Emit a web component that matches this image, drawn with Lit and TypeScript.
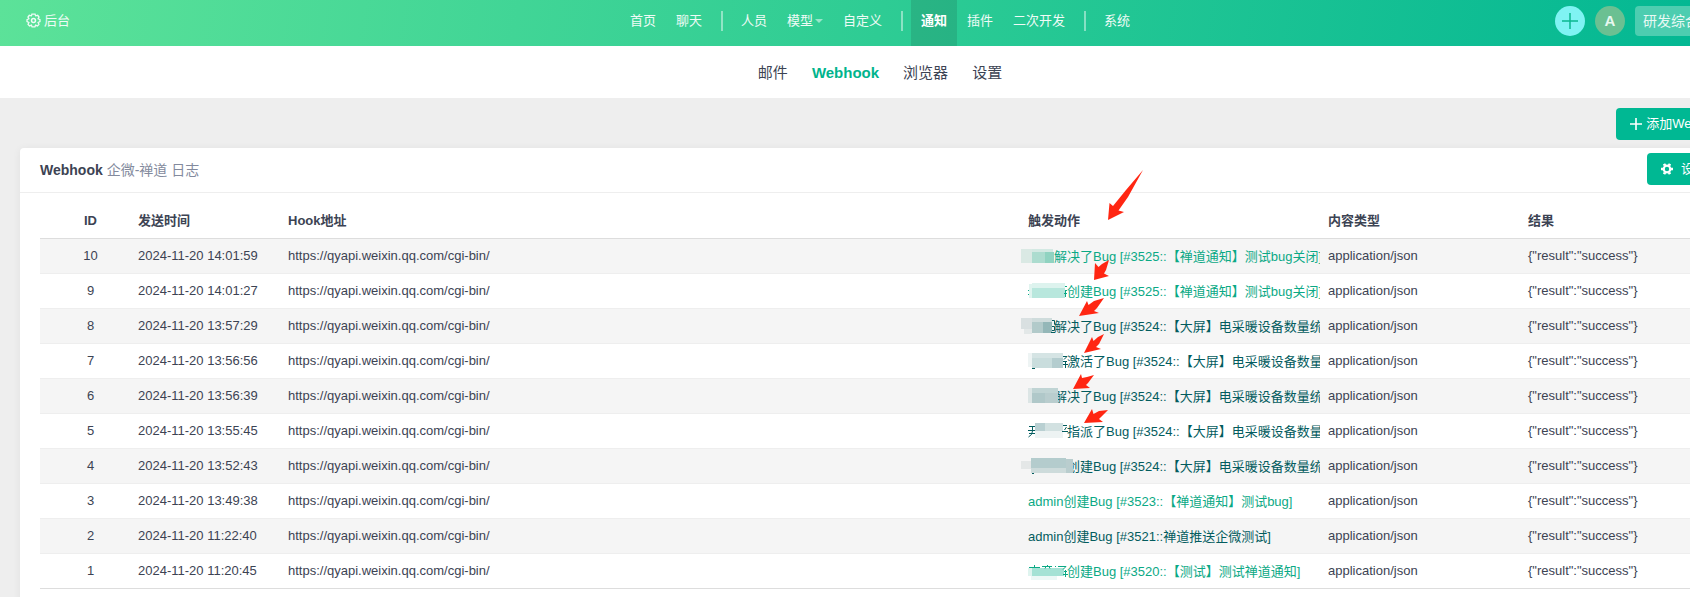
import { LitElement, html, css, svg, nothing } from "lit";
import { customElement } from "lit/decorators.js";

type Patch = [number, number, number, number, string];
interface LogRow {
  id: number;
  time: string;
  tone: "new" | "seen";
  masked: number;
  text: string;
  patches: Patch[];
  ink?: string;
}

const HOOK = "https://qyapi.weixin.qq.com/cgi-bin/";
const LONG = "Bug [#3524::【大屏】电采暖设备数量统计";

/* Each masked name is a set of tinted blocks [x, y, width, height, colour] plus the strokes left showing. */
const ROWS: LogRow[] = [
  { id: 10, time: "2024-11-20 14:01:59", tone: "new", masked: 2, text: "解决了Bug [#3525::【禅道通知】测试bug关闭]",
    patches: [[0, 1, 11, 14, "#dae9e4"], [11, 1, 21, 3, "#d3e9e3"], [11, 4, 13, 11, "#acdccf"], [24, 4, 9, 11, "#90d3c1"]] },
  { id: 9, time: "2024-11-20 14:01:27", tone: "new", masked: 3, text: "创建Bug [#3525::【禅道通知】测试bug关闭]",
    patches: [[8, 1, 3, 14, "#e0f4ef"], [11, 0, 33, 5, "#ddf3ee"], [11, 5, 33, 10, "#b8e7dd"]],
    ink: "M7 7.500h1M7 11.500h1M44 3.500h2M44 7.500h2M43 10.500h3M44.500 8v6" },
  { id: 8, time: "2024-11-20 13:57:29", tone: "seen", masked: 2, text: `解决了${LONG}`,
    patches: [[0, 0, 11, 11, "#d9e0e1"], [3, 11, 8, 5, "#e3e8e8"], [11, 0, 20, 4, "#cfdcdc"], [11, 4, 11, 11, "#b2caca"], [22, 4, 9, 11, "#94b7b8"]],
    ink: "M31 2.500h2.500v4M31 8.500h2.500v4h-2.500M30 14.500h4" },
  { id: 7, time: "2024-11-20 13:56:56", tone: "seen", masked: 3, text: `激活了${LONG}`,
    patches: [[7, 0, 4, 14, "#eef4f4"], [11, 0, 31, 5, "#d5e4e4"], [11, 5, 20, 10, "#c9dddd"], [31, 5, 11, 10, "#b4cdcf"]],
    ink: "M11 15.500h3M42 3.500h4l-3 3M42 8.500h4M42 11.500h5M44.500 8v7" },
  { id: 6, time: "2024-11-20 13:56:39", tone: "seen", masked: 2, text: `解决了${LONG}`,
    patches: [[7, 0, 4, 15, "#dce5e5"], [11, 0, 26, 5, "#c0d4d4"], [11, 5, 13, 10, "#b0c8c9"], [24, 5, 13, 10, "#b9cdce"]] },
  { id: 5, time: "2024-11-20 13:55:45", tone: "seen", masked: 3, text: `指派了${LONG}`,
    patches: [[14, 0, 10, 8, "#b9d0d2"], [24, 0, 18, 8, "#d2e1e1"], [14, 8, 28, 7, "#edf3f3"]],
    ink: "M8 3.500h6M7 7.500h7M8 10.500h6M11.500 4v4q0 4-4 6M42 2.500h4M45.500 4l-2 3M41 8.500h6" },
  { id: 4, time: "2024-11-20 13:52:43", tone: "seen", masked: 3, text: `创建${LONG}`,
    patches: [[0, 3, 10, 8, "#e4e7e7"], [10, 0, 35, 10, "#b4cccd"], [10, 10, 35, 5, "#cddbdb"], [45, 1, 7, 14, "#b9cdce"]],
    ink: "M11 15.500h2" },
  { id: 3, time: "2024-11-20 13:49:38", tone: "new", masked: 0, text: "admin创建Bug [#3523::【禅道通知】测试bug]", patches: [] },
  { id: 2, time: "2024-11-20 11:22:40", tone: "seen", masked: 0, text: "admin创建Bug [#3521::禅道推送企微测试]", patches: [] },
  { id: 1, time: "2024-11-20 11:20:45", tone: "new", masked: 3, text: "创建Bug [#3520::【测试】测试禅道通知]",
    patches: [[7, 5, 4, 8, "#dff4ef"], [11, 5, 32, 8, "#a5e2d5"], [10, 13, 26, 4, "#ecf8f6"]],
    ink: "M8 4.500h11M13.500 2v3M21 3.500h10M26.500 2v2M24 5.500l1-2M29 5.500l-1-2M34 3.500h1M37 3.500h8l-3 3M43 8.500h3M42 11.500h5M44.500 7v7" },
];

const NAV: { label: string; active?: boolean; caret?: boolean; sep?: boolean }[] = [
  { label: "首页" }, { label: "聊天" }, { label: "", sep: true },
  { label: "人员" }, { label: "模型", caret: true }, { label: "自定义" }, { label: "", sep: true },
  { label: "通知", active: true }, { label: "插件" }, { label: "二次开发" }, { label: "", sep: true },
  { label: "系统" },
];

const gearOutline = html`<svg class="gear" viewBox="0 0 16 16" aria-hidden="true">
  <path d="M6.300 1.200h3.400l.5 1.800 2.300-.6 1.400 1.900-1 1.800 2 1v2l-2 1 .9 2-1.600 1.700-2-.8-.7 1.800H6.500l-.7-1.800-2 .8-1.600-1.700.9-2-2-1v-2l2-1-1-1.800 1.400-1.900 2.300.6z" fill="none" stroke="currentColor" stroke-width="1.400"/>
  <circle cx="8" cy="8" r="2.100" fill="none" stroke="currentColor" stroke-width="1.600"/></svg>`;

@customElement("app-root")
export class AppRoot extends LitElement {
  static styles = css`
    :host { display: block; overflow: hidden; min-height: 100vh; background: #eee;
      font: 13px/20px "Liberation Sans", "Noto Sans CJK SC", sans-serif; color: #3c4353; }
    * { box-sizing: border-box; }
    a { color: inherit; text-decoration: none; }
    button { font: inherit; border: 0; cursor: pointer; }
    .page { position: relative; min-width: 1760px; }
    .header { display: grid; grid-template-columns: 1fr auto 1fr; height: 46px;
      background: linear-gradient(100deg, #5ce299, #2ecc94 50%, #00b693); color: #effbf6; }
    .home { display: flex; align-items: center; gap: 3px; padding: 0 26px 5px; }
    .gear { width: 15px; height: 15px; }
    .nav { display: flex; }
    .nav a { display: flex; align-items: center; gap: 2px; padding: 0 10px 5px; }
    .nav a.active { background: rgba(30, 90, 70, .2); font-weight: 700; color: #fff; }
    .sep { width: 2px; height: 20px; margin: 11px 8px 0 9px; background: rgba(255, 255, 255, .45); }
    .caret { width: 7px; border: solid transparent; border-width: 4px 4px 0; border-top-color: rgba(255, 255, 255, .5); }
    .tools { display: flex; justify-content: flex-end; gap: 10px; padding: 6px 20px 10px 0; }
    .round { display: grid; place-items: center; width: 30px; height: 30px; padding: 0; border-radius: 50%; }
    .create { background: #7ff3f3; color: #0cb890; }
    .avatar { background: #6bc092; color: #e8f8f0; font-size: 15px; font-weight: 700; }
    .vision { width: 105px; height: 30px; padding: 0 8px; border-radius: 4px; text-align: left; white-space: nowrap;
      background: #4dcdb0; color: #e8f9f4; font-size: 14px; }
    .subnav { display: flex; justify-content: center; gap: 24px; height: 52px; padding-top: 17px; background: #fff;
      font-size: 15px; }
    .subnav .active { color: #00b48d; font-weight: 700; }
    .toolbar { display: flex; justify-content: flex-end; padding: 10px 20px 8px; }
    .primary { display: flex; align-items: center; gap: 4px; height: 32px; padding: 0 13px 1px 14px; border-radius: 4px;
      background: #00b893; color: #fff; }
    .panel { margin: 0 20px; background: #fff; border-radius: 4px 4px 0 0; box-shadow: 0 1px 8px rgba(0, 0, 0, .06);
      padding-bottom: 20px; }
    .heading { display: flex; align-items: center; height: 45px; padding: 0 20px 2px; border-bottom: 1px solid #eee; }
    .heading h1 { flex: 1; margin: 0; padding-top: 2px; font-size: 14px; font-weight: 700; }
    .heading small { font-size: 14px; font-weight: 400; color: #838a9d; }
    .heading .primary { gap: 8px; }
    .body { padding: 11px 20px 0; }
    table { width: 100%; table-layout: fixed; border-collapse: collapse; border-bottom: 1px solid #ddd; }
    th, td { padding: 7px 8px; overflow: hidden; text-align: left; white-space: nowrap; line-height: 20px; }
    th { border-bottom: 1px solid #ddd; font-weight: 700; }
    td { border-bottom: 1px solid #eee; }
    tbody tr:nth-child(odd) { background: #f5f5f5; }
    tbody tr:last-child td { border-bottom-color: #ddd; }
    .c-id { width: 90px; padding-left: 19px; text-align: center; }
    .c-time { width: 150px; }
    .c-action { width: 300px; }
    .c-type, .c-result { width: 200px; }
    td.action { padding: 8px 8px 6px; }
    .link { position: relative; }
    .new { color: #0ba985; }
    .seen { color: #035c5e; }
    .m2, .m3 { display: inline-block; width: 26px; }
    .m3 { width: 39px; }
    .mosaic { position: absolute; left: -7px; top: -1px; width: 56px; height: 18px; }
    .marks { position: absolute; left: 0; top: 0; width: 1760px; height: 597px; pointer-events: none; }
  `;

  private mask(r: LogRow) {
    if (!r.masked) return nothing;
    return html`<span class="m${r.masked}"></span><svg class="mosaic" viewBox="0 0 56 18" aria-hidden="true">
      ${r.patches.map(([x, y, w, h, c]) => svg`<rect x=${x} y=${y} width=${w} height=${h} fill=${c} />`)}
      ${r.ink ? svg`<path d=${r.ink} fill="none" stroke="currentColor" />` : nothing}</svg>`;
  }

  render() {
    return html`<div class="page">
      <header class="header">
        <a class="home" href="#">${gearOutline}<span>后台</span></a>
        <nav class="nav">${NAV.map((n) => n.sep ? html`<span class="sep"></span>`
          : html`<a href="#" class=${n.active ? "active" : ""}>${n.label}${n.caret ? html`<span class="caret"></span>` : nothing}</a>`)}</nav>
        <div class="tools">
          <button class="round create" aria-label="新建"><svg width="18" height="18" viewBox="0 0 18 18"><path d="M9 1v16M1 9h16" stroke="currentColor" stroke-width="1.500"/></svg></button>
          <button class="round avatar">A</button>
          <button class="vision">研发综合界面</button>
        </div>
      </header>
      <nav class="subnav">
        <a href="#">邮件</a><a href="#" class="active">Webhook</a><a href="#">浏览器</a><a href="#">设置</a>
      </nav>
      <div class="toolbar">
        <button class="primary"><svg width="12" height="12" viewBox="0 0 12 12"><path d="M6 0v12M0 6h12" stroke="#fff" stroke-width="1.600"/></svg>添加Webhook</button>
      </div>
      <main class="panel">
        <div class="heading">
          <h1>Webhook <small>企微-禅道 日志</small></h1>
          <button class="primary"><svg width="12" height="12" viewBox="0 0 12 12"><circle cx="6" cy="6" r="3.300" fill="none" stroke="#fff" stroke-width="2.200"/><path d="M12 6h-2M2 6h-2M9 11.200l-1-1.700M4 2.500l-1-1.700M3 11.200l1-1.700M8 2.500l1-1.700" stroke="#fff" stroke-width="2.600"/></svg>设置</button>
        </div>
        <div class="body">
          <table>
            <thead><tr><th class="c-id">ID</th><th class="c-time">发送时间</th><th>Hook地址</th><th class="c-action">触发动作</th><th class="c-type">内容类型</th><th class="c-result">结果</th></tr></thead>
            <tbody>${ROWS.map((r) => html`<tr>
              <td class="c-id">${r.id}</td><td>${r.time}</td><td>${HOOK}</td>
              <td class="action"><a href="#" class="link ${r.tone}">${this.mask(r)}${r.text}</a></td>
              <td>application/json</td><td>{"result":"success"}</td></tr>`)}</tbody>
          </table>
        </div>
      </main>
      <svg class="marks" viewBox="0 0 1760 597" fill="#ff2612" aria-hidden="true">
        <path d="M1143 170L1128 197 1118.500 210.500 1124 212 1108 220 1109.500 203 1113 206 1126 190z"/>
        <path d="M1109 260L1106 270 1104 273.500 1109 276 1094 280 1095 263 1098.500 267 1102 264z"/>
        <path d="M1104 298L1097 308 1094 311 1099 313 1079 316 1087 301 1088.500 305 1094 301z"/>
        <path d="M1104 334L1099 344 1096 347 1101 349 1084 353 1092 337 1093.500 341 1098 337z"/>
        <path d="M1094 375L1088 383 1086 385 1090 388 1073 389 1081 374 1082 378 1087 377z"/>
        <path d="M1108 410L1101 417 1099 419 1103 422 1084 423 1092 409 1093.500 414 1099 411z"/>
      </svg>
    </div>`;
  }
}
